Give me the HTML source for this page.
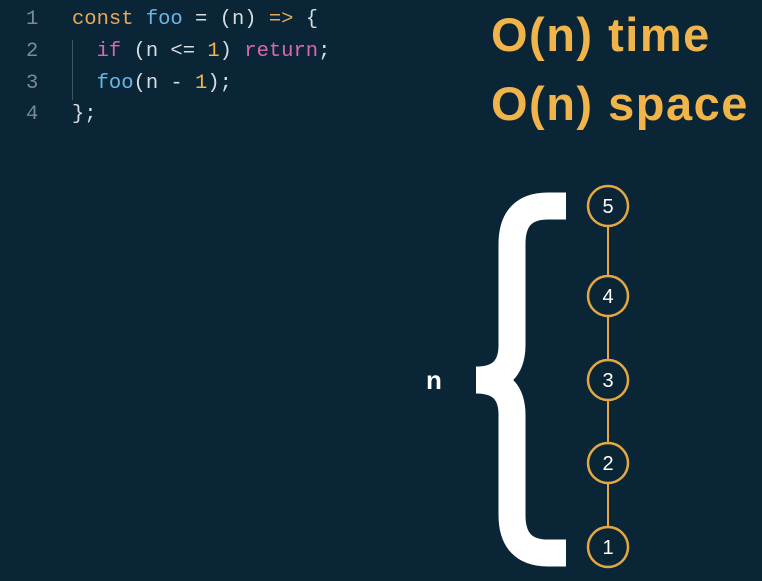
<!DOCTYPE html>
<html><head><style>
html,body{margin:0;padding:0;}
body{width:762px;height:581px;background:#0a2535;position:relative;overflow:hidden;font-family:"Liberation Sans",sans-serif;}
.code{position:absolute;left:0;top:4px;font-family:"Liberation Mono",monospace;font-size:20.5px;line-height:31.7px;color:#d6dde3;}
.ln{position:absolute;left:26px;width:20px;color:#7d8a93;}
.c{position:absolute;left:72px;white-space:pre;}
.k{color:#e8a85a}.f{color:#6bb6e8}.p{color:#d868b0}.n{color:#f0b44a}
.guide{position:absolute;left:72px;top:40px;width:1px;height:60px;background:#3d5566;}
.t{position:absolute;left:491px;color:#f0b44a;font-weight:bold;font-size:47px;letter-spacing:1.5px;white-space:nowrap;}
.nlab{position:absolute;left:426px;top:365px;color:#fff;font-weight:bold;font-size:26px;}
</style></head><body>
<div class="code">
<div class="ln" style="top:0">1</div><div class="c" style="top:0"><span class="k">const</span> <span class="f">foo</span> = (n) <span class="k">=&gt;</span> {</div>
<div class="ln" style="top:32px">2</div><div class="c" style="top:32px">  <span class="p">if</span> (n &lt;= <span class="n">1</span>) <span class="p">return</span>;</div>
<div class="ln" style="top:64px">3</div><div class="c" style="top:64px">  <span class="f">foo</span>(n - <span class="n">1</span>);</div>
<div class="ln" style="top:95px">4</div><div class="c" style="top:95px">};</div>
</div>
<div class="guide"></div>
<div class="t" style="top:7px">O(n) time</div>
<div class="t" style="top:76px">O(n) space</div>
<div class="nlab">n</div>
<svg width="762" height="581" style="position:absolute;left:0;top:0">
<path d="M566,206 H548 Q512,206 512,244 V345 Q512,380 476,380 Q512,380 512,415 V515 Q512,553 548,553 H566" fill="none" stroke="#fff" stroke-width="27" stroke-linejoin="miter"/>
<line x1="608" y1="206" x2="608" y2="547" stroke="#e3a843" stroke-width="2"/>
<g fill="#0a2535" stroke="#e3a843" stroke-width="2.5">
<circle cx="608" cy="206" r="20"/><circle cx="608" cy="296" r="20"/><circle cx="608" cy="380" r="20"/><circle cx="608" cy="463" r="20"/><circle cx="608" cy="547" r="20"/>
</g>
<g fill="#fff" font-family="Liberation Sans,sans-serif" font-size="20" text-anchor="middle">
<text x="608" y="213">5</text><text x="608" y="303">4</text><text x="608" y="387">3</text><text x="608" y="470">2</text><text x="608" y="554">1</text>
</g>
</svg>
</body></html>
